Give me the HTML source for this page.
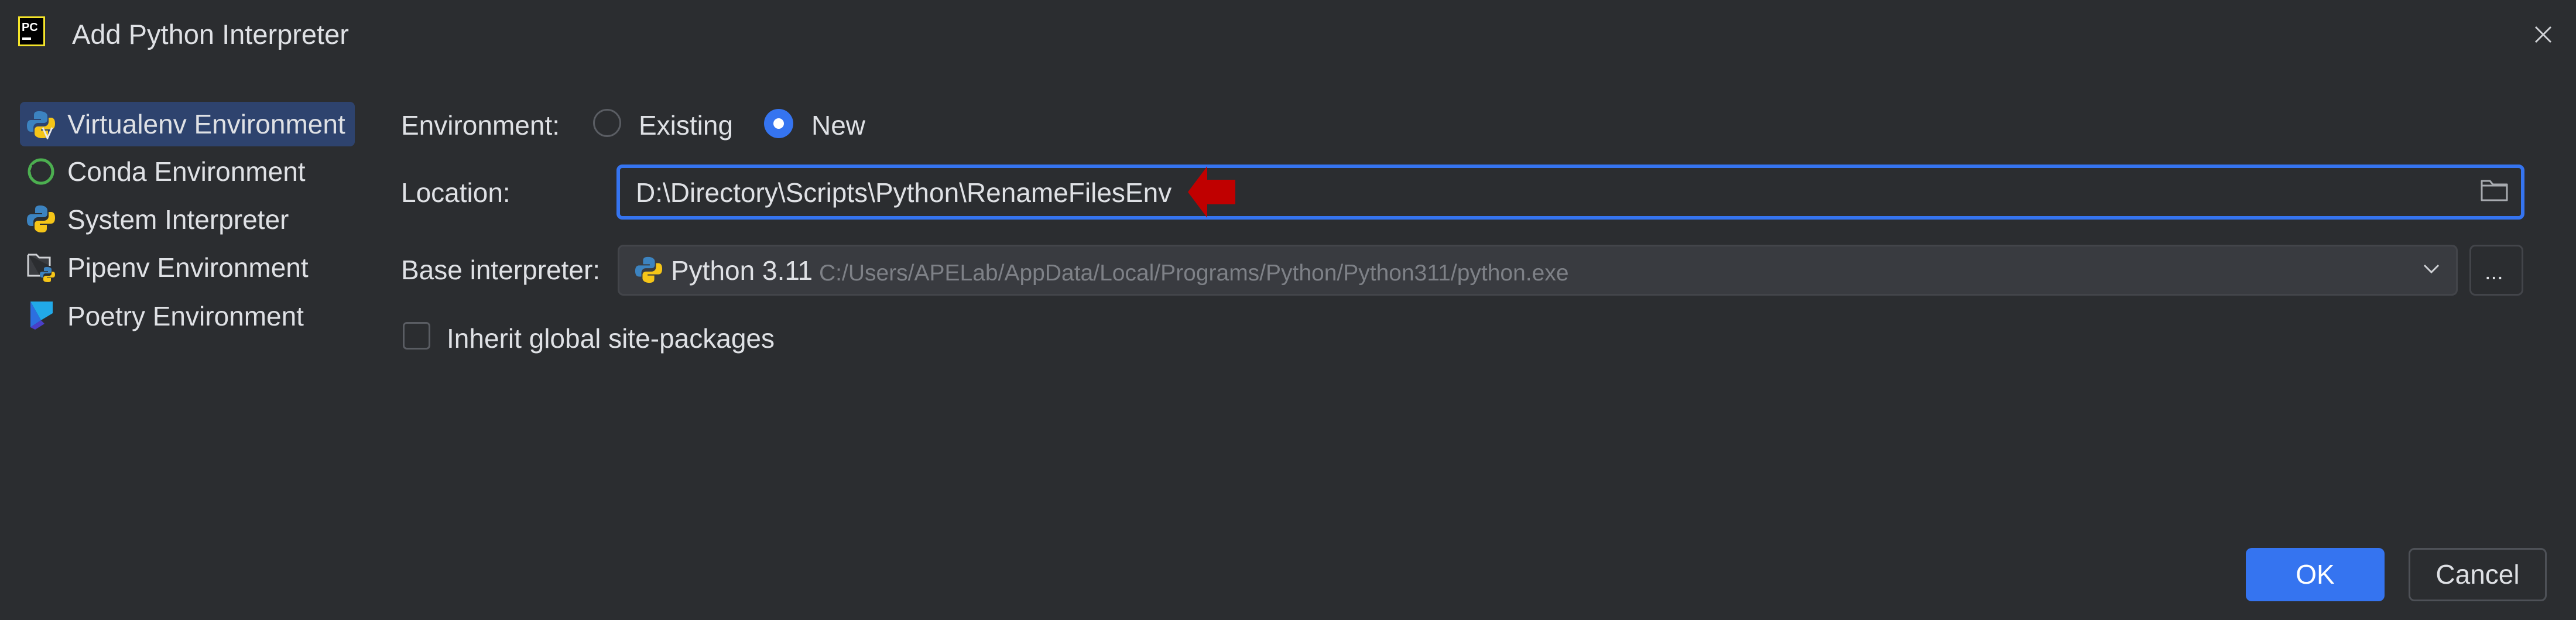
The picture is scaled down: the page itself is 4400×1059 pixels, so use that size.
<!DOCTYPE html>
<html><head><meta charset="utf-8"><style>
html,body{margin:0;padding:0;width:4400px;height:1059px;background:#2b2d30;overflow:hidden;font-family:"Liberation Sans",sans-serif;color:#dfe1e5}
.a{position:absolute}
.t{font-size:46px;line-height:1;white-space:nowrap}
svg{position:absolute}
</style></head><body>
<svg style="left:31px;top:28px" width="46" height="51" viewBox="0 0 46 51"><rect x="1.5" y="1.5" width="43" height="48" fill="#000" stroke="#f5e52a" stroke-width="3"/><text x="6" y="25" font-family="Liberation Sans" font-weight="bold" font-size="20" fill="#fff">PC</text><rect x="7" y="36" width="15" height="4" fill="#fff"/></svg>
<div class="a t" style="left:123px;top:35px;font-size:47px">Add Python Interpreter</div>
<svg style="left:4328px;top:43px" width="32" height="32" viewBox="0 0 32 32"><path d="M3 3L29 29M29 3L3 29" stroke="#cfd1d5" stroke-width="3"/></svg>

<div class="a" style="left:34px;top:174px;width:572px;height:76px;background:#2e436e;border-radius:8px"></div>

<svg style="left:45px;top:188px" width="50" height="50" viewBox="0 0 50 50"><path d="M22 2c-9 0-9 4-9 8v5h12v2H8c-5 0-7 4-7 10s2 10 7 10h4v-7c0-5 4-8 8-8h10c4 0 6-3 6-6V10c0-4-4-8-14-8z" fill="#3c83c0"/><path d="M28 48c9 0 9-4 9-8v-5H25v-2h17c5 0 7-4 7-10s-2-10-7-10h-4v7c0 5-4 8-8 8H20c-4 0-6 3-6 6v6c0 4 4 8 14 8z" fill="#f5c518"/><path d="M28 30l8 18 8-18" fill="none" stroke="#e8e8e8" stroke-width="3"/></svg>
<div class="a t" style="left:115px;top:189px">Virtualenv Environment</div>

<svg style="left:45px;top:268px" width="50" height="50" viewBox="0 0 50 50"><circle cx="25" cy="25" r="20" fill="none" stroke="#4caf50" stroke-width="5"/><path d="M10 14l3 3M7 24h4M10 34l3-3" stroke="#2b2d30" stroke-width="3"/></svg>
<div class="a t" style="left:115px;top:270px">Conda Environment</div>

<svg style="left:45px;top:349px" width="50" height="50" viewBox="0 0 50 50"><path d="M24 2c-9 0-9 4-9 8v5h12v2H8c-5 0-7 4-7 10s2 10 7 10h4v-7c0-5 4-8 8-8h10c4 0 6-3 6-6V10c0-4-4-8-12-8z" fill="#3c83c0"/><path d="M26 48c9 0 9-4 9-8v-5H23v-2h19c5 0 7-4 7-10s-2-10-7-10h-4v7c0 5-4 8-8 8H20c-4 0-6 3-6 6v6c0 4 4 8 12 8z" fill="#f5c518"/></svg>
<div class="a t" style="left:115px;top:352px">System Interpreter</div>

<svg style="left:45px;top:430px" width="52" height="52" viewBox="0 0 52 52"><path d="M3 5h14l5 5h18v14M3 5v36h20" fill="#3a3c40" stroke="#cfd1d5" stroke-width="3"/><path d="M35 26c-5 0-5 2-5 4v3h7v1H27c-3 0-4 2-4 5s1 5 4 5h2v-3c0-3 2-4 4-4h6c2 0 4-2 4-4v-3c0-2-2-4-8-4z" fill="#3c83c0"/><path d="M37 52c5 0 5-2 5-4v-3h-7v-1h10c3 0 4-2 4-5s-1-5-4-5h-2v3c0 3-2 4-4 4h-6c-2 0-4 2-4 4v3c0 2 2 4 8 4z" fill="#f5c518"/></svg>
<div class="a t" style="left:115px;top:434px">Pipenv Environment</div>

<svg style="left:50px;top:513px" width="42" height="52" viewBox="0 0 42 52"><path d="M2 2h38v20L20 34z" fill="#21a9e8"/><path d="M2 2l18 32-18 12z" fill="#2c6fe0"/><path d="M2 46l18-12 6 6-16 10z" fill="#4a3fc9"/></svg>
<div class="a t" style="left:115px;top:517px">Poetry Environment</div>

<div class="a t" style="left:685px;top:191px">Environment:</div>
<div class="a" style="left:1013px;top:186px;width:48px;height:48px;border:3px solid #5a5d63;border-radius:50%;box-sizing:border-box"></div>
<div class="a t" style="left:1091px;top:191px">Existing</div>
<div class="a" style="left:1305px;top:186px;width:50px;height:50px;background:#3574f0;border-radius:50%"></div>
<div class="a" style="left:1321px;top:202px;width:18px;height:18px;background:#fff;border-radius:50%"></div>
<div class="a t" style="left:1386px;top:191px">New</div>

<div class="a t" style="left:685px;top:306px">Location:</div>
<div class="a" style="left:1053px;top:281px;width:3259px;height:94px;border:6px solid #3574f0;border-radius:10px;box-sizing:border-box;background:#2b2d30"></div>
<div class="a t" style="left:1086px;top:306px">D:\Directory\Scripts\Python\RenameFilesEnv</div>
<svg style="left:2025px;top:282px" width="90" height="92" viewBox="0 0 90 92"><path d="M4 46L37 2v23h48v42H37v23z" fill="#c00000"/></svg>
<svg style="left:4236px;top:304px" width="50" height="42" viewBox="0 0 50 42"><path d="M3 5h14l5 6h24v27H3z" fill="none" stroke="#a8abb0" stroke-width="3" stroke-linejoin="round"/><path d="M3 13h43" stroke="#a8abb0" stroke-width="3"/></svg>

<div class="a t" style="left:685px;top:438px">Base interpreter:</div>
<div class="a" style="left:1055px;top:418px;width:3143px;height:87px;border:3px solid #43454a;border-radius:10px;box-sizing:border-box;background:#393b40"></div>
<svg style="left:1084px;top:435px" width="48" height="52" viewBox="0 0 50 50"><path d="M24 2c-9 0-9 4-9 8v5h12v2H8c-5 0-7 4-7 10s2 10 7 10h4v-7c0-5 4-8 8-8h10c4 0 6-3 6-6V10c0-4-4-8-12-8z" fill="#3c83c0"/><path d="M26 48c9 0 9-4 9-8v-5H23v-2h19c5 0 7-4 7-10s-2-10-7-10h-4v7c0 5-4 8-8 8H20c-4 0-6 3-6 6v6c0 4 4 8 12 8z" fill="#f5c518"/></svg>
<div class="a t" style="left:1146px;top:439px">Python 3.11</div>
<div class="a" style="left:1399px;top:445px;font-size:39px;color:#7e8187;white-space:nowrap">C:/Users/APELab/AppData/Local/Programs/Python/Python311/python.exe</div>
<svg style="left:4138px;top:450px" width="30" height="18" viewBox="0 0 30 18"><path d="M3 3l12 12 12-12" fill="none" stroke="#cfd1d5" stroke-width="3"/></svg>
<div class="a" style="left:4218px;top:418px;width:92px;height:87px;border:3px solid #43454a;border-radius:10px;box-sizing:border-box"></div>
<div class="a" style="left:4244px;top:444px;font-size:38px;color:#dfe1e5">...</div>

<div class="a" style="left:688px;top:550px;width:47px;height:47px;border:3px solid #5a5d63;border-radius:7px;box-sizing:border-box"></div>
<div class="a t" style="left:763px;top:555px">Inherit global site-packages</div>

<div class="a" style="left:3836px;top:936px;width:237px;height:91px;background:#3574f0;border-radius:10px"></div>
<div class="a t" style="left:3836px;top:958px;width:237px;text-align:center;color:#fff">OK</div>
<div class="a" style="left:4114px;top:936px;width:236px;height:91px;border:3px solid #4e5157;border-radius:10px;box-sizing:border-box"></div>
<div class="a t" style="left:4114px;top:958px;width:236px;text-align:center">Cancel</div>
</body></html>
